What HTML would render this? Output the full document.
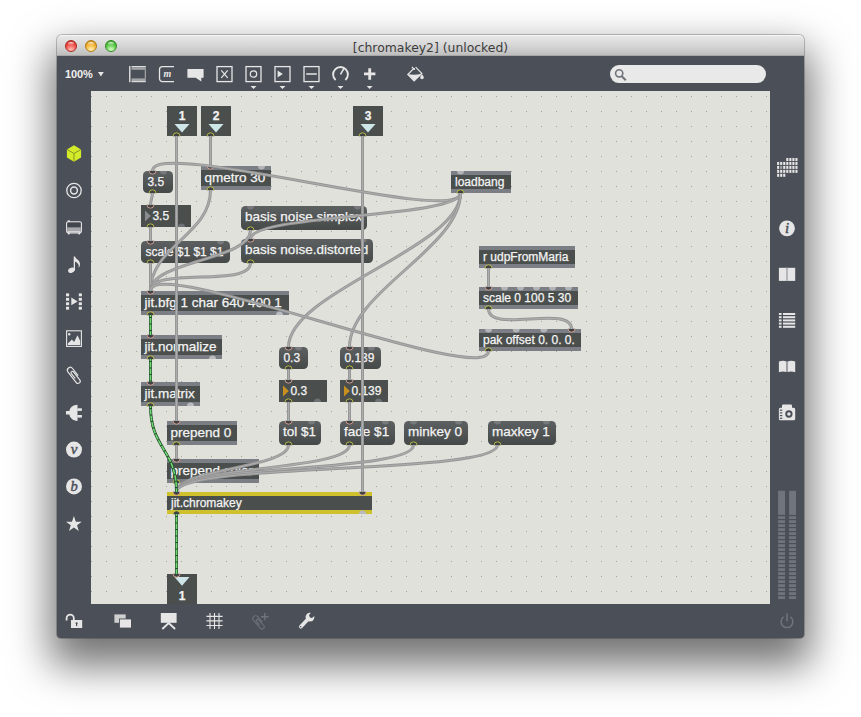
<!DOCTYPE html><html><head><meta charset="utf-8"><title>[chromakey2] (unlocked)</title>
<style>
html,body{margin:0;padding:0;background:#fff;}
body{width:861px;height:717px;overflow:hidden;position:relative;font-family:"Liberation Sans",sans-serif;}
#win{position:absolute;left:57px;top:35px;width:747px;height:603px;background:#4B4F57;border-radius:5px 5px 4px 4px;
 box-shadow:0 0 0 1px rgba(0,0,0,.22),0 21px 40px 7px rgba(0,0,0,.55);}
#title{position:absolute;left:0;top:0;width:747px;height:21px;border-radius:5px 5px 0 0;overflow:hidden;
 background:linear-gradient(#e9e9e9 0,#d6d6d6 50%,#bfbfbf 93%,#9a9a9a 100%);box-shadow:inset 0 1px 0 #f6f6f6;
 font-family:"DejaVu Sans","Liberation Sans",sans-serif;font-size:12.4px;color:#3c3c3c;text-align:center;line-height:25px;letter-spacing:0;}
.tl{position:absolute;top:5px;width:12px;height:12px;border-radius:50%;box-sizing:border-box;}
#canvas{position:absolute;left:91px;top:91px;width:679px;height:513px;background:#E0E1DB;overflow:hidden;}
#inner{position:absolute;left:-91px;top:-91px;width:861px;height:717px;}
.b{position:absolute;box-sizing:border-box;color:#f4f4f4;-webkit-text-stroke:0.25px #f4f4f4;white-space:nowrap;overflow:hidden;}
.obj{background:#4A4F4D;border-top:4px solid #7B7E84;border-bottom:4px solid #7B7E84;}
.sel{border-color:#CFC12E;}
.msg{background:linear-gradient(#5d6061,#454948);border-radius:4.5px;}
.flo{background:#4A4F4D;}
.io{background:#4A4F4D;font-weight:bold;text-align:center;}
.b span{position:absolute;left:0;}
#zoom{position:absolute;left:65px;top:67px;font-size:11px;font-weight:bold;color:#f0f0f0;line-height:14px;letter-spacing:-0.1px;}
svg{position:absolute;left:0;top:0;}
.ic{font-family:"Liberation Serif",serif;font-style:italic;font-weight:normal;fill:#4B4F57;stroke:#4B4F57;stroke-width:0.45px;}
</style></head><body>
<div id="win"><div id="title">[chromakey2] (unlocked)
<div class="tl" style="left:8px;background:radial-gradient(circle at 50% 92%,#ffb0a8 0,#ffb0a8 12%,#f24d48 58%,#a8281f 108%);border:1px solid #a8281f;"><div style="position:absolute;left:2px;top:0.5px;width:6px;height:3.4px;border-radius:50%;background:linear-gradient(rgba(255,255,255,.8),rgba(255,255,255,.05));"></div></div>
<div class="tl" style="left:28px;background:radial-gradient(circle at 50% 92%,#ffe9a0 0,#ffe9a0 12%,#f3b234 58%,#b07a12 108%);border:1px solid #b07a12;"><div style="position:absolute;left:2px;top:0.5px;width:6px;height:3.4px;border-radius:50%;background:linear-gradient(rgba(255,255,255,.8),rgba(255,255,255,.05));"></div></div>
<div class="tl" style="left:48px;background:radial-gradient(circle at 50% 92%,#c6f7b4 0,#c6f7b4 12%,#58c746 58%,#2f8a22 108%);border:1px solid #2f8a22;"><div style="position:absolute;left:2px;top:0.5px;width:6px;height:3.4px;border-radius:50%;background:linear-gradient(rgba(255,255,255,.8),rgba(255,255,255,.05));"></div></div>
</div></div>
<div id="zoom">100%</div>
<div id="canvas"><div id="inner">
<svg width="861" height="717"><defs><pattern id="dots" x="91" y="96" width="15" height="15" patternUnits="userSpaceOnUse"><rect x="0" y="0" width="1" height="1" fill="#a3a39f"/></pattern></defs><rect x="91" y="91" width="679" height="513" fill="url(#dots)"/></svg>
<div class="b io" style="left:167px;top:106px;width:30px;height:30px;font-size:12px;"><span style="left:0;width:30px;top:3.94px;line-height:13.79px">1</span></div>
<div class="b io" style="left:201px;top:106px;width:30px;height:30px;font-size:12px;"><span style="left:0;width:30px;top:3.94px;line-height:13.79px">2</span></div>
<div class="b io" style="left:353px;top:106px;width:30px;height:30px;font-size:12px;"><span style="left:0;width:30px;top:3.94px;line-height:13.79px">3</span></div>
<div class="b msg" style="left:143px;top:171px;width:30px;height:22px;font-size:12px;"><span style="left:4.4px;top:5.04px;line-height:13.79px">3.5</span></div>
<div class="b obj" style="left:201px;top:166px;width:70px;height:24px;font-size:13.5px;"><span style="left:3.5px;top:0.08px;line-height:15.51px">qmetro 30</span></div>
<div class="b obj" style="left:451px;top:171px;width:60px;height:22px;font-size:12px;"><span style="left:4px;top:1.14px;line-height:13.79px">loadbang</span></div>
<div class="b flo" style="left:141px;top:205px;width:50px;height:22px;font-size:12px;"><span style="left:11.4px;top:5.04px;line-height:13.79px">3.5</span></div>
<div class="b msg" style="left:241px;top:206px;width:126px;height:24px;font-size:13.5px;"><span style="left:4.1px;top:3.48px;line-height:15.51px">basis noise.simplex</span></div>
<div class="b msg" style="left:141px;top:241px;width:89px;height:22px;font-size:12px;"><span style="left:4.4px;top:5.04px;line-height:13.79px">scale $1 $1 $1</span></div>
<div class="b msg" style="left:241px;top:239px;width:132px;height:24px;font-size:13.5px;"><span style="left:4.1px;top:3.48px;line-height:15.51px">basis noise.distorted</span></div>
<div class="b obj" style="left:479px;top:246px;width:96px;height:22px;font-size:12px;"><span style="left:4px;top:1.14px;line-height:13.79px">r udpFromMaria</span></div>
<div class="b obj" style="left:479px;top:287px;width:99px;height:22px;font-size:12px;"><span style="left:4px;top:1.14px;line-height:13.79px">scale 0 100 5 30</span></div>
<div class="b obj" style="left:141px;top:291px;width:148px;height:24px;font-size:13.5px;"><span style="left:3.5px;top:0.08px;line-height:15.51px">jit.bfg 1 char 640 400 1</span></div>
<div class="b obj" style="left:479px;top:329px;width:102px;height:22px;font-size:12px;"><span style="left:4px;top:1.14px;line-height:13.79px">pak offset 0. 0. 0.</span></div>
<div class="b obj" style="left:141px;top:335px;width:81px;height:24px;font-size:13.5px;"><span style="left:3.5px;top:0.08px;line-height:15.51px">jit.normalize</span></div>
<div class="b msg" style="left:279px;top:347px;width:29px;height:22px;font-size:12px;"><span style="left:4.4px;top:5.04px;line-height:13.79px">0.3</span></div>
<div class="b msg" style="left:340px;top:347px;width:41px;height:22px;font-size:12px;"><span style="left:4.4px;top:5.04px;line-height:13.79px">0.139</span></div>
<div class="b obj" style="left:141px;top:382px;width:59px;height:24px;font-size:13.5px;"><span style="left:3.5px;top:0.08px;line-height:15.51px">jit.matrix</span></div>
<div class="b flo" style="left:279px;top:380px;width:48px;height:22px;font-size:12px;"><span style="left:11.4px;top:5.04px;line-height:13.79px">0.3</span></div>
<div class="b flo" style="left:340px;top:380px;width:48px;height:22px;font-size:12px;"><span style="left:11.4px;top:5.04px;line-height:13.79px">0.139</span></div>
<div class="b obj" style="left:167px;top:421px;width:70px;height:24px;font-size:13.5px;"><span style="left:3.5px;top:0.08px;line-height:15.51px">prepend 0</span></div>
<div class="b msg" style="left:279px;top:421px;width:42px;height:24px;font-size:13.5px;"><span style="left:4.1px;top:3.48px;line-height:15.51px">tol $1</span></div>
<div class="b msg" style="left:340px;top:421px;width:55px;height:24px;font-size:13.5px;"><span style="left:4.1px;top:3.48px;line-height:15.51px">fade $1</span></div>
<div class="b msg" style="left:404px;top:421px;width:64px;height:24px;font-size:13.5px;"><span style="left:4.1px;top:3.48px;line-height:15.51px">minkey 0</span></div>
<div class="b msg" style="left:488px;top:421px;width:68px;height:24px;font-size:13.5px;"><span style="left:4.1px;top:3.48px;line-height:15.51px">maxkey 1</span></div>
<div class="b obj" style="left:167px;top:459px;width:92px;height:24px;font-size:13.5px;"><span style="left:3.5px;top:0.08px;line-height:15.51px">prepend color</span></div>
<div class="b obj sel" style="left:167px;top:492px;width:205px;height:22px;font-size:12px;"><span style="left:4px;top:1.14px;line-height:13.79px">jit.chromakey</span></div>
<div class="b io" style="left:167px;top:574px;width:30px;height:30px;font-size:12px;"><span style="left:0;width:30px;top:15.94px;line-height:13.79px">1</span></div>
<svg width="861" height="717"><path d="M174.5,124h15l-7.5,8.6z" fill="#CFE6E9"/><path d="M173.0,136.3A3.5,3.5 0 0 1 180.0,136.3" fill="#3f4143" stroke="#C6CA45" stroke-width="0.85"/><path d="M208.5,124h15l-7.5,8.6z" fill="#CFE6E9"/><path d="M207.0,136.3A3.5,3.5 0 0 1 214.0,136.3" fill="#3f4143" stroke="#C6CA45" stroke-width="0.85"/><path d="M360.5,124h15l-7.5,8.6z" fill="#CFE6E9"/><path d="M359.0,136.3A3.5,3.5 0 0 1 366.0,136.3" fill="#3f4143" stroke="#C6CA45" stroke-width="0.85"/><path d="M149.0,170.7A3.5,3.5 0 0 0 156.0,170.7" fill="#3f4143" stroke="#E3A79B" stroke-width="0.85"/><path d="M160.0,171A3.5,3.5 0 0 0 167.0,171z" fill="#77797D"/><path d="M149.0,193.3A3.5,3.5 0 0 1 156.0,193.3" fill="#3f4143" stroke="#C6CA45" stroke-width="0.85"/><path d="M207.0,165.7A3.5,3.5 0 0 0 214.0,165.7" fill="#3f4143" stroke="#E3A79B" stroke-width="0.85"/><path d="M258.0,166A3.5,3.5 0 0 0 265.0,166z" fill="#B2B4B8"/><path d="M207.0,190.3A3.5,3.5 0 0 1 214.0,190.3" fill="#3f4143" stroke="#C6CA45" stroke-width="0.85"/><path d="M457.0,171A3.5,3.5 0 0 0 464.0,171z" fill="#B2B4B8"/><path d="M457.0,193.3A3.5,3.5 0 0 1 464.0,193.3" fill="#3f4143" stroke="#C6CA45" stroke-width="0.85"/><path d="M145,210.5v11l5.8,-5.5z" fill="#8A8D8F"/><path d="M147.0,204.7A3.5,3.5 0 0 0 154.0,204.7" fill="#3f4143" stroke="#E3A79B" stroke-width="0.85"/><path d="M147.0,227.3A3.5,3.5 0 0 1 154.0,227.3" fill="#3f4143" stroke="#C6CA45" stroke-width="0.85"/><path d="M178.0,227A3.5,3.5 0 0 1 185.0,227z" fill="#6E7173"/><path d="M247.0,206A3.5,3.5 0 0 0 254.0,206z" fill="#77797D"/><path d="M354.0,206A3.5,3.5 0 0 0 361.0,206z" fill="#77797D"/><path d="M247.0,230.3A3.5,3.5 0 0 1 254.0,230.3" fill="#3f4143" stroke="#C6CA45" stroke-width="0.85"/><path d="M147.0,240.7A3.5,3.5 0 0 0 154.0,240.7" fill="#3f4143" stroke="#E3A79B" stroke-width="0.85"/><path d="M217.0,241A3.5,3.5 0 0 0 224.0,241z" fill="#77797D"/><path d="M147.0,263.3A3.5,3.5 0 0 1 154.0,263.3" fill="#3f4143" stroke="#C6CA45" stroke-width="0.85"/><path d="M247.0,238.7A3.5,3.5 0 0 0 254.0,238.7" fill="#3f4143" stroke="#E3A79B" stroke-width="0.85"/><path d="M360.0,239A3.5,3.5 0 0 0 367.0,239z" fill="#77797D"/><path d="M247.0,263.3A3.5,3.5 0 0 1 254.0,263.3" fill="#3f4143" stroke="#C6CA45" stroke-width="0.85"/><path d="M485.0,268.3A3.5,3.5 0 0 1 492.0,268.3" fill="#3f4143" stroke="#C6CA45" stroke-width="0.85"/><path d="M485.0,286.7A3.5,3.5 0 0 0 492.0,286.7" fill="#3f4143" stroke="#E3A79B" stroke-width="0.85"/><path d="M501.0,287A3.5,3.5 0 0 0 508.0,287z" fill="#B2B4B8"/><path d="M517.0,287A3.5,3.5 0 0 0 524.0,287z" fill="#B2B4B8"/><path d="M533.0,287A3.5,3.5 0 0 0 540.0,287z" fill="#B2B4B8"/><path d="M549.0,287A3.5,3.5 0 0 0 556.0,287z" fill="#B2B4B8"/><path d="M565.0,287A3.5,3.5 0 0 0 572.0,287z" fill="#B2B4B8"/><path d="M485.0,309.3A3.5,3.5 0 0 1 492.0,309.3" fill="#3f4143" stroke="#C6CA45" stroke-width="0.85"/><path d="M147.0,290.7A3.5,3.5 0 0 0 154.0,290.7" fill="#3f4143" stroke="#E3A79B" stroke-width="0.85"/><path d="M147.0,315.3A3.5,3.5 0 0 1 154.0,315.3" fill="#3f4143" stroke="#C6CA45" stroke-width="0.85"/><path d="M276.0,315A3.5,3.5 0 0 1 283.0,315z" fill="#B9BBBF"/><path d="M485.0,329A3.5,3.5 0 0 0 492.0,329z" fill="#B2B4B8"/><path d="M512.6666666666666,329A3.5,3.5 0 0 0 519.6666666666666,329z" fill="#B2B4B8"/><path d="M540.3333333333334,329A3.5,3.5 0 0 0 547.3333333333334,329z" fill="#B2B4B8"/><path d="M568.0,328.7A3.5,3.5 0 0 0 575.0,328.7" fill="#3f4143" stroke="#E3A79B" stroke-width="0.85"/><path d="M485.0,351.3A3.5,3.5 0 0 1 492.0,351.3" fill="#3f4143" stroke="#C6CA45" stroke-width="0.85"/><path d="M147.0,334.7A3.5,3.5 0 0 0 154.0,334.7" fill="#3f4143" stroke="#E3A79B" stroke-width="0.85"/><path d="M147.0,359.3A3.5,3.5 0 0 1 154.0,359.3" fill="#3f4143" stroke="#C6CA45" stroke-width="0.85"/><path d="M209.0,359A3.5,3.5 0 0 1 216.0,359z" fill="#B9BBBF"/><path d="M285.0,346.7A3.5,3.5 0 0 0 292.0,346.7" fill="#3f4143" stroke="#E3A79B" stroke-width="0.85"/><path d="M295.0,347A3.5,3.5 0 0 0 302.0,347z" fill="#77797D"/><path d="M285.0,369.3A3.5,3.5 0 0 1 292.0,369.3" fill="#3f4143" stroke="#C6CA45" stroke-width="0.85"/><path d="M346.0,346.7A3.5,3.5 0 0 0 353.0,346.7" fill="#3f4143" stroke="#E3A79B" stroke-width="0.85"/><path d="M368.0,347A3.5,3.5 0 0 0 375.0,347z" fill="#77797D"/><path d="M346.0,369.3A3.5,3.5 0 0 1 353.0,369.3" fill="#3f4143" stroke="#C6CA45" stroke-width="0.85"/><path d="M147.0,381.7A3.5,3.5 0 0 0 154.0,381.7" fill="#3f4143" stroke="#E3A79B" stroke-width="0.85"/><path d="M147.0,406.3A3.5,3.5 0 0 1 154.0,406.3" fill="#3f4143" stroke="#C6CA45" stroke-width="0.85"/><path d="M187.0,406A3.5,3.5 0 0 1 194.0,406z" fill="#B9BBBF"/><path d="M283,385.5v11l5.8,-5.5z" fill="#C8901E"/><path d="M285.0,379.7A3.5,3.5 0 0 0 292.0,379.7" fill="#3f4143" stroke="#E3A79B" stroke-width="0.85"/><path d="M285.0,402.3A3.5,3.5 0 0 1 292.0,402.3" fill="#3f4143" stroke="#C6CA45" stroke-width="0.85"/><path d="M314.0,402A3.5,3.5 0 0 1 321.0,402z" fill="#6E7173"/><path d="M344,385.5v11l5.8,-5.5z" fill="#C8901E"/><path d="M346.0,379.7A3.5,3.5 0 0 0 353.0,379.7" fill="#3f4143" stroke="#E3A79B" stroke-width="0.85"/><path d="M346.0,402.3A3.5,3.5 0 0 1 353.0,402.3" fill="#3f4143" stroke="#C6CA45" stroke-width="0.85"/><path d="M375.0,402A3.5,3.5 0 0 1 382.0,402z" fill="#6E7173"/><path d="M173.0,420.7A3.5,3.5 0 0 0 180.0,420.7" fill="#3f4143" stroke="#E3A79B" stroke-width="0.85"/><path d="M173.0,445.3A3.5,3.5 0 0 1 180.0,445.3" fill="#3f4143" stroke="#C6CA45" stroke-width="0.85"/><path d="M285.0,420.7A3.5,3.5 0 0 0 292.0,420.7" fill="#3f4143" stroke="#E3A79B" stroke-width="0.85"/><path d="M308.0,421A3.5,3.5 0 0 0 315.0,421z" fill="#77797D"/><path d="M285.0,445.3A3.5,3.5 0 0 1 292.0,445.3" fill="#3f4143" stroke="#C6CA45" stroke-width="0.85"/><path d="M346.0,420.7A3.5,3.5 0 0 0 353.0,420.7" fill="#3f4143" stroke="#E3A79B" stroke-width="0.85"/><path d="M382.0,421A3.5,3.5 0 0 0 389.0,421z" fill="#77797D"/><path d="M346.0,445.3A3.5,3.5 0 0 1 353.0,445.3" fill="#3f4143" stroke="#C6CA45" stroke-width="0.85"/><path d="M410.0,421A3.5,3.5 0 0 0 417.0,421z" fill="#77797D"/><path d="M455.0,421A3.5,3.5 0 0 0 462.0,421z" fill="#77797D"/><path d="M410.0,445.3A3.5,3.5 0 0 1 417.0,445.3" fill="#3f4143" stroke="#C6CA45" stroke-width="0.85"/><path d="M494.0,421A3.5,3.5 0 0 0 501.0,421z" fill="#77797D"/><path d="M543.0,421A3.5,3.5 0 0 0 550.0,421z" fill="#77797D"/><path d="M494.0,445.3A3.5,3.5 0 0 1 501.0,445.3" fill="#3f4143" stroke="#C6CA45" stroke-width="0.85"/><path d="M173.0,458.7A3.5,3.5 0 0 0 180.0,458.7" fill="#3f4143" stroke="#E3A79B" stroke-width="0.85"/><path d="M173.0,483.3A3.5,3.5 0 0 1 180.0,483.3" fill="#3f4143" stroke="#C6CA45" stroke-width="0.85"/><path d="M173.0,491.7A3.5,3.5 0 0 0 180.0,491.7" fill="#3f4143" stroke="#E3A79B" stroke-width="0.85"/><path d="M359.0,491.7A3.5,3.5 0 0 0 366.0,491.7" fill="#3f4143" stroke="#E3A79B" stroke-width="0.85"/><path d="M173.0,514.3A3.5,3.5 0 0 1 180.0,514.3" fill="#3f4143" stroke="#C6CA45" stroke-width="0.85"/><path d="M359.0,514A3.5,3.5 0 0 1 366.0,514z" fill="#B9BBBF"/><path d="M174.5,577h15l-7.5,8.8z" fill="#CFE6E9"/><path d="M173.0,573.7A3.5,3.5 0 0 0 180.0,573.7" fill="#3f4143" stroke="#E3A79B" stroke-width="0.85"/><g fill="none" stroke-linecap="butt"><path d="M176.5,136L176.5,421" stroke="#969696" stroke-width="3"/><path d="M176.5,136L176.5,421" stroke="#adadad" stroke-width="1.1"/><path d="M210.5,136L210.5,166" stroke="#969696" stroke-width="3"/><path d="M210.5,136L210.5,166" stroke="#adadad" stroke-width="1.1"/><path d="M362.5,136L362.5,492" stroke="#969696" stroke-width="3"/><path d="M362.5,136L362.5,492" stroke="#adadad" stroke-width="1.1"/><path d="M210.5,190C210.5,235.0 150.5,246.0 150.5,291" stroke="#969696" stroke-width="3"/><path d="M210.5,190C210.5,235.0 150.5,246.0 150.5,291" stroke="#adadad" stroke-width="1.1"/><path d="M152.5,193C152.5,197.0 150.5,201.0 150.5,205" stroke="#969696" stroke-width="3"/><path d="M152.5,193C152.5,197.0 150.5,201.0 150.5,205" stroke="#adadad" stroke-width="1.1"/><path d="M150.5,227L150.5,241" stroke="#969696" stroke-width="3"/><path d="M150.5,227L150.5,241" stroke="#adadad" stroke-width="1.1"/><path d="M150.5,263L150.5,291" stroke="#969696" stroke-width="3"/><path d="M150.5,263L150.5,291" stroke="#adadad" stroke-width="1.1"/><path d="M460.5,193C460.5,227.0 152.5,137.0 152.5,171" stroke="#969696" stroke-width="3"/><path d="M460.5,193C460.5,227.0 152.5,137.0 152.5,171" stroke="#adadad" stroke-width="1.1"/><path d="M460.5,193C460.5,218.0 250.5,214.0 250.5,239" stroke="#969696" stroke-width="3"/><path d="M460.5,193C460.5,218.0 250.5,214.0 250.5,239" stroke="#adadad" stroke-width="1.1"/><path d="M460.5,193C460.5,248.0 288.5,292.0 288.5,347" stroke="#969696" stroke-width="3"/><path d="M460.5,193C460.5,248.0 288.5,292.0 288.5,347" stroke="#adadad" stroke-width="1.1"/><path d="M460.5,193C460.5,248.0 349.5,292.0 349.5,347" stroke="#969696" stroke-width="3"/><path d="M460.5,193C460.5,248.0 349.5,292.0 349.5,347" stroke="#adadad" stroke-width="1.1"/><path d="M250.5,230C250.5,260.5 150.5,260.5 150.5,291" stroke="#969696" stroke-width="3"/><path d="M250.5,230C250.5,260.5 150.5,260.5 150.5,291" stroke="#adadad" stroke-width="1.1"/><path d="M250.5,263C250.5,288.0 150.5,266.0 150.5,291" stroke="#969696" stroke-width="3"/><path d="M250.5,263C250.5,288.0 150.5,266.0 150.5,291" stroke="#adadad" stroke-width="1.1"/><path d="M488.5,351C488.5,389.0 150.5,253.0 150.5,291" stroke="#969696" stroke-width="3"/><path d="M488.5,351C488.5,389.0 150.5,253.0 150.5,291" stroke="#adadad" stroke-width="1.1"/><path d="M488.5,268L488.5,287" stroke="#969696" stroke-width="3"/><path d="M488.5,268L488.5,287" stroke="#adadad" stroke-width="1.1"/><path d="M488.5,309C488.5,334.0 571.5,304.0 571.5,329" stroke="#969696" stroke-width="3"/><path d="M488.5,309C488.5,334.0 571.5,304.0 571.5,329" stroke="#adadad" stroke-width="1.1"/><path d="M288.5,369L288.5,380" stroke="#969696" stroke-width="3"/><path d="M288.5,369L288.5,380" stroke="#adadad" stroke-width="1.1"/><path d="M288.5,402L288.5,421" stroke="#969696" stroke-width="3"/><path d="M288.5,402L288.5,421" stroke="#adadad" stroke-width="1.1"/><path d="M349.5,369L349.5,380" stroke="#969696" stroke-width="3"/><path d="M349.5,369L349.5,380" stroke="#adadad" stroke-width="1.1"/><path d="M349.5,402L349.5,421" stroke="#969696" stroke-width="3"/><path d="M349.5,402L349.5,421" stroke="#adadad" stroke-width="1.1"/><path d="M288.5,445C288.5,468.0 176.5,469.0 176.5,492" stroke="#969696" stroke-width="3"/><path d="M288.5,445C288.5,468.0 176.5,469.0 176.5,492" stroke="#adadad" stroke-width="1.1"/><path d="M349.5,445C349.5,471.0 176.5,466.0 176.5,492" stroke="#969696" stroke-width="3"/><path d="M349.5,445C349.5,471.0 176.5,466.0 176.5,492" stroke="#adadad" stroke-width="1.1"/><path d="M413.5,445C413.5,473.0 176.5,464.0 176.5,492" stroke="#969696" stroke-width="3"/><path d="M413.5,445C413.5,473.0 176.5,464.0 176.5,492" stroke="#adadad" stroke-width="1.1"/><path d="M497.5,445C497.5,475.0 176.5,462.0 176.5,492" stroke="#969696" stroke-width="3"/><path d="M497.5,445C497.5,475.0 176.5,462.0 176.5,492" stroke="#adadad" stroke-width="1.1"/><path d="M176.5,445L176.5,459" stroke="#969696" stroke-width="3"/><path d="M176.5,445L176.5,459" stroke="#adadad" stroke-width="1.1"/><path d="M176.5,483L176.5,492" stroke="#969696" stroke-width="3"/><path d="M176.5,483L176.5,492" stroke="#adadad" stroke-width="1.1"/><path d="M150.5,315L150.5,335" stroke="#234a2b" stroke-width="2.9"/><path d="M150.5,315L150.5,335" stroke="#6bd970" stroke-width="1.55" stroke-dasharray="5.4 1.1" stroke-dashoffset="3.5"/><path d="M150.5,359L150.5,382" stroke="#234a2b" stroke-width="2.9"/><path d="M150.5,359L150.5,382" stroke="#6bd970" stroke-width="1.55" stroke-dasharray="5.4 1.1" stroke-dashoffset="3.5"/><path d="M150.5,406C150.5,449.0 176.5,449.0 176.5,492" stroke="#234a2b" stroke-width="2.9"/><path d="M150.5,406C150.5,449.0 176.5,449.0 176.5,492" stroke="#6bd970" stroke-width="1.55" stroke-dasharray="5.4 1.1" stroke-dashoffset="3.5"/><path d="M176.5,514L176.5,574" stroke="#234a2b" stroke-width="2.9"/><path d="M176.5,514L176.5,574" stroke="#6bd970" stroke-width="1.55" stroke-dasharray="5.4 1.1" stroke-dashoffset="3.5"/></g></svg>
</div></div>
<svg width="861" height="717"><path d="M98,72h5.8l-2.9,4.4z" fill="#E6E6E6"/><g fill="none"><rect x="129" y="66" width="1.5" height="16.2" fill="#d6d6d6"/><rect x="131.5" y="66" width="14.3" height="1.2" fill="#dcdcdc"/><rect x="131.5" y="67.2" width="14.3" height="2.6" fill="#a2a4a8"/><rect x="131.5" y="78.4" width="14.3" height="2.6" fill="#a2a4a8"/><rect x="131.5" y="81" width="14.3" height="1.2" fill="#dcdcdc"/><rect x="144.8" y="69.8" width="1" height="8.6" fill="#b8b9bc"/></g><path d="M174,66.6h-11.5a3,3 0 0 0 -3,3v9a3,3 0 0 0 3,3h11.5" fill="none" stroke="#E6E6E6" stroke-width="1.3"/><text x="163.4" y="76.7" font-family="Liberation Serif,serif" font-style="italic" font-weight="bold" font-size="10" fill="#E6E6E6">m</text><path d="M187.4,69h16.2v8.7h-2.3v3.8l-5.6,-3.8h-8.3z" fill="#E6E6E6"/><rect x="217" y="66.6" width="15" height="15" fill="none" stroke="#E6E6E6" stroke-width="1.3"/><path d="M221.3,70.3l6.4,7.6M227.7,70.3l-6.4,7.6" stroke="#E6E6E6" stroke-width="1.2" fill="none"/><rect x="246" y="66.6" width="15" height="15" fill="none" stroke="#E6E6E6" stroke-width="1.3"/><circle cx="253.5" cy="74" r="3.2" fill="none" stroke="#E6E6E6" stroke-width="1.2"/><rect x="275" y="66.6" width="15" height="15" fill="none" stroke="#E6E6E6" stroke-width="1.3"/><path d="M277.6,70.6v6.8l5.2,-3.4z" fill="#E6E6E6"/><rect x="304" y="66.6" width="15" height="15" fill="none" stroke="#E6E6E6" stroke-width="1.3"/><path d="M306.2,74h10.6" stroke="#E6E6E6" stroke-width="1.5"/><path d="M335.6,80A7.4,7.4 0 1 1 345.4,80" fill="none" stroke="#E6E6E6" stroke-width="1.9"/><path d="M340.5,74.3l3.9,-6.6" stroke="#E6E6E6" stroke-width="1.6"/><path d="M364,73.9h11.4M369.7,68.2v11.6" stroke="#E6E6E6" stroke-width="2.8"/><path d="M250.5,86h6l-3,3z" fill="#E6E6E6"/><path d="M279.5,86h6l-3,3z" fill="#E6E6E6"/><path d="M308.5,86h6l-3,3z" fill="#E6E6E6"/><path d="M337.5,86h6l-3,3z" fill="#E6E6E6"/><path d="M366.6,86h6l-3,3z" fill="#E6E6E6"/><path d="M413.8,68.4l-6,6.1l6.3,6.4l7.7,-7.5l-6.2,-6.3" fill="none" stroke="#E6E6E6" stroke-width="1.2"/><path d="M408,74.2l6.1,6.6l7.2,-7.1c-4,1.2 -9,1.2 -13.3,0.5z" fill="#E6E6E6"/><path d="M411.9,67l2.6,2.6" stroke="#E6E6E6" stroke-width="1.1"/><circle cx="414.2" cy="69" r="0.9" fill="#E6E6E6"/><path d="M422,74.3c1.2,1.6 1.8,2.4 1.8,3.2a1.8,1.8 0 0 1 -3.6,0c0,-0.8 0.6,-1.6 1.8,-3.2z" fill="#E6E6E6"/><rect x="610" y="65.1" width="156" height="17.9" rx="8.95" fill="#E9E9E9"/><circle cx="619.2" cy="73.3" r="3.6" fill="none" stroke="#70757C" stroke-width="1.6"/><path d="M621.8,76.2l4,4" stroke="#70757C" stroke-width="2"/><path d="M74,145.3l7.1,4.1v8.2l-7.1,4.1l-7.1,-4.1v-8.2z" fill="#D4EB2B"/><path d="M66.9,149.4l7.1,4.1l7.1,-4.1M74,153.5v8.2" fill="none" stroke="#7f8f1e" stroke-width="0.9"/><circle cx="74" cy="190.5" r="7.2" fill="none" stroke="#E6E6E6" stroke-width="1.3"/><circle cx="74" cy="190.5" r="3.4" fill="none" stroke="#E6E6E6" stroke-width="1.5"/><rect x="66.7" y="221.8" width="14.6" height="11" rx="1.5" fill="none" stroke="#E6E6E6" stroke-width="1.3"/><rect x="67.4" y="222.6" width="13.2" height="4.8" fill="#41454c"/><rect x="67.4" y="227.4" width="13.2" height="3.1" fill="#a6a8ac"/><rect x="67.4" y="230.5" width="13.2" height="1.6" fill="#d4d4d4"/><circle cx="68.8" cy="233.4" r="1.1" fill="#E6E6E6"/><circle cx="79.2" cy="233.4" r="1.1" fill="#E6E6E6"/><rect x="67.6" y="220.4" width="2.4" height="1.5" fill="#E6E6E6"/><ellipse cx="71.4" cy="270.2" rx="3.4" ry="2.5" transform="rotate(-25 71.4 270.2)" fill="#E6E6E6"/><path d="M73.7,270.4V256.6h1.3c0.5,2.4 5.2,3.6 5,7.8c-0.1,1.4 -0.7,2.6 -1.5,3.4c0.8,-2.6 -0.2,-4.8 -3.5,-6.2v8.8z" fill="#E6E6E6"/><rect x="66" y="293.40" width="3.1" height="2.9" fill="#E6E6E6"/><rect x="78.8" y="293.40" width="3.1" height="2.9" fill="#E6E6E6"/><rect x="66" y="297.85" width="3.1" height="2.9" fill="#E6E6E6"/><rect x="78.8" y="297.85" width="3.1" height="2.9" fill="#E6E6E6"/><rect x="66" y="302.30" width="3.1" height="2.9" fill="#E6E6E6"/><rect x="78.8" y="302.30" width="3.1" height="2.9" fill="#E6E6E6"/><rect x="66" y="306.75" width="3.1" height="2.9" fill="#E6E6E6"/><rect x="78.8" y="306.75" width="3.1" height="2.9" fill="#E6E6E6"/><path d="M71.3,297.6v7.6l6.3,-3.8z" fill="#E6E6E6"/><rect x="66.6" y="330.8" width="14.8" height="15.6" fill="none" stroke="#E6E6E6" stroke-width="1.1"/><path d="M67.8,345v-1.5l4.1,-4l2.2,2.6l3.4,-6.8l2.7,5.6v4.1z" fill="#E6E6E6"/><circle cx="69.2" cy="334.2" r="1.2" fill="#E6E6E6"/><g transform="translate(70.3,370.3) rotate(51.6)" fill="none" stroke="#E6E6E6" stroke-width="1.15"><path d="M9,-2.9L0,-2.9A2.9,2.9 0 0 0 0,2.9L13.3,2.9A2.2,2.2 0 0 0 13.3,-1.5L3.2,-1.5A1.35,1.35 0 0 0 3.2,1.2L9.5,1.2"/></g><path d="M77.5,404.7v16.2c-4.6,0 -8,-3.4 -8,-6.4h-3.5v-3.5h3.5c0,-3 3.4,-6.3 8,-6.3z" fill="#E6E6E6"/><rect x="77.3" y="408.3" width="4.6" height="2.6" fill="#E6E6E6"/><rect x="77.3" y="415" width="4.6" height="2.6" fill="#E6E6E6"/><circle cx="74" cy="449.6" r="8" fill="#E6E6E6"/><text x="74" y="454" text-anchor="middle" class="ic" font-size="15">v</text><circle cx="74" cy="486.4" r="8" fill="#E6E6E6"/><text x="74" y="491.2" text-anchor="middle" class="ic" font-size="14.5">b</text><polygon points="73.90,516.00 75.84,521.63 81.79,521.74 77.04,525.32 78.78,531.01 73.90,527.60 69.02,531.01 70.76,525.32 66.01,521.74 71.96,521.63" fill="#E6E6E6"/><rect x="71" y="620" width="11.2" height="8" fill="#E6E6E6"/><circle cx="76.6" cy="623.3" r="1.1" fill="#4B4F57"/><rect x="76" y="623.5" width="1.2" height="2.6" fill="#4B4F57"/><path d="M66.6,620.6v-2.4a3.6,3.6 0 0 1 7.2,0v2" fill="none" stroke="#E6E6E6" stroke-width="1.8"/><rect x="114.4" y="614.4" width="11.3" height="8.4" fill="#cfcfcf"/><rect x="119" y="618.5" width="12.6" height="9.7" fill="#4B4F57"/><rect x="119.9" y="619.4" width="11.1" height="8.2" fill="#E6E6E6"/><rect x="160.8" y="613" width="15.8" height="9.8" fill="#E6E6E6"/><path d="M162.3,629l6.4,-6l6.4,6" fill="none" stroke="#E6E6E6" stroke-width="1.9"/><path d="M210,613v16M214.5,613v16M219,613v16M206.4,616.4h16.2M206.4,620.9h16.2M206.4,625.5h16.2" stroke="#E6E6E6" stroke-width="1.1" fill="none"/><g transform="translate(255.6,618.5) rotate(48.4)" fill="none" stroke="#6E737B" stroke-width="1.1"><path d="M7,-2.8L0,-2.8A2.8,2.8 0 0 0 0,2.8L10.6,2.8A2.1,2.1 0 0 0 10.6,-1.4L2.8,-1.4A1.3,1.3 0 0 0 2.8,1.2L7.4,1.2"/></g><path d="M261,616.7h7.7M264.8,613.1v7.1" stroke="#6E737B" stroke-width="1.5"/><path d="M300.8,626.7L308.8,618.3" stroke="#E6E6E6" stroke-width="3.7" stroke-linecap="round" fill="none"/><circle cx="310" cy="617.1" r="4.4" fill="#E6E6E6"/><path d="M311.4,615.6L316.5,610.3" stroke="#4B4F57" stroke-width="4.5" stroke-linecap="round" fill="none"/><circle cx="300.7" cy="626.7" r="0.75" fill="#4B4F57"/><rect x="786.25" y="158.00" width="2.1" height="3" fill="#E6E6E6"/><rect x="789.30" y="158.00" width="2.1" height="3" fill="#E6E6E6"/><rect x="792.35" y="158.00" width="2.1" height="3" fill="#E6E6E6"/><rect x="795.40" y="158.00" width="2.1" height="3" fill="#E6E6E6"/><rect x="777.10" y="161.95" width="2.1" height="3" fill="#E6E6E6"/><rect x="780.15" y="161.95" width="2.1" height="3" fill="#E6E6E6"/><rect x="783.20" y="161.95" width="2.1" height="3" fill="#E6E6E6"/><rect x="786.25" y="161.95" width="2.1" height="3" fill="#E6E6E6"/><rect x="789.30" y="161.95" width="2.1" height="3" fill="#E6E6E6"/><rect x="792.35" y="161.95" width="2.1" height="3" fill="#E6E6E6"/><rect x="795.40" y="161.95" width="2.1" height="3" fill="#E6E6E6"/><rect x="777.10" y="165.90" width="2.1" height="3" fill="#E6E6E6"/><rect x="780.15" y="165.90" width="2.1" height="3" fill="#9fa2a7"/><rect x="783.20" y="165.90" width="2.1" height="3" fill="#E6E6E6"/><rect x="786.25" y="165.90" width="2.1" height="3" fill="#E6E6E6"/><rect x="789.30" y="165.90" width="2.1" height="3" fill="#E6E6E6"/><rect x="792.35" y="165.90" width="2.1" height="3" fill="#E6E6E6"/><rect x="795.40" y="165.90" width="2.1" height="3" fill="#E6E6E6"/><rect x="777.10" y="169.85" width="2.1" height="3" fill="#E6E6E6"/><rect x="780.15" y="169.85" width="2.1" height="3" fill="#E6E6E6"/><rect x="783.20" y="169.85" width="2.1" height="3" fill="#E6E6E6"/><rect x="786.25" y="169.85" width="2.1" height="3" fill="#E6E6E6"/><rect x="789.30" y="169.85" width="2.1" height="3" fill="#E6E6E6"/><rect x="792.35" y="169.85" width="2.1" height="3" fill="#E6E6E6"/><rect x="795.40" y="169.85" width="2.1" height="3" fill="#E6E6E6"/><rect x="777.10" y="173.80" width="2.1" height="3" fill="#E6E6E6"/><rect x="780.15" y="173.80" width="2.1" height="3" fill="#E6E6E6"/><rect x="783.20" y="173.80" width="2.1" height="3" fill="#E6E6E6"/><circle cx="787" cy="228.3" r="7.9" fill="#E6E6E6"/><text x="787" y="233.4" text-anchor="middle" class="ic" font-size="15">i</text><rect x="778.9" y="267.8" width="16.3" height="13.1" fill="#E6E6E6"/><rect x="786.2" y="267.8" width="1.6" height="13.1" fill="#a9abaf"/><rect x="778.9" y="313.0" width="2.7" height="2" fill="#E6E6E6"/><rect x="783" y="313.0" width="12.2" height="2" fill="#E6E6E6"/><rect x="778.9" y="316.2" width="2.7" height="2" fill="#E6E6E6"/><rect x="783" y="316.2" width="12.2" height="2" fill="#E6E6E6"/><rect x="778.9" y="319.4" width="2.7" height="2" fill="#E6E6E6"/><rect x="783" y="319.4" width="12.2" height="2" fill="#E6E6E6"/><rect x="778.9" y="322.6" width="2.7" height="2" fill="#E6E6E6"/><rect x="783" y="322.6" width="12.2" height="2" fill="#E6E6E6"/><rect x="778.9" y="325.8" width="2.7" height="2" fill="#E6E6E6"/><rect x="783" y="325.8" width="12.2" height="2" fill="#E6E6E6"/><path d="M778.9,361.6c2.6,-1 5.4,-1 7.4,-0.2v10.6c-2,-0.7 -4.8,-0.7 -7.4,0.2z" fill="#E6E6E6"/><path d="M795.2,361.6c-2.6,-1 -5.4,-1 -7.4,-0.2v10.6c2,-0.7 4.8,-0.7 7.4,0.2z" fill="#E6E6E6"/><rect x="786.3" y="361.4" width="1.5" height="10.6" fill="#a9abaf"/><path d="M780.4,407.8h1.6v-2a1.2,1.2 0 0 1 1.2,-1.2h7.6a1.2,1.2 0 0 1 1.2,1.2v2h1.7a1.5,1.5 0 0 1 1.5,1.5v9.5a1.5,1.5 0 0 1 -1.5,1.5h-13.3a1.5,1.5 0 0 1 -1.5,-1.5v-9.5a1.5,1.5 0 0 1 1.5,-1.5z" fill="#E6E6E6"/><circle cx="788.9" cy="414" r="2.7" fill="none" stroke="#4B4F57" stroke-width="1.9"/><rect x="779.9" y="409.6" width="2.4" height="1.2" fill="#4B4F57"/><rect x="779.9" y="412.3" width="2.4" height="1.2" fill="#4B4F57"/><rect x="779.9" y="415.0" width="2.4" height="1.2" fill="#4B4F57"/><rect x="779.9" y="417.7" width="2.4" height="1.2" fill="#4B4F57"/><rect x="778.1" y="490.8" width="6.9" height="24.1" fill="#70747C"/><rect x="778.1" y="516.2" width="6.9" height="2.8" fill="#70747C"/><rect x="778.1" y="520.2" width="6.9" height="2.8" fill="#70747C"/><rect x="778.1" y="524.2" width="6.9" height="2.8" fill="#70747C"/><rect x="778.1" y="528.2" width="6.9" height="2.8" fill="#70747C"/><rect x="778.1" y="532.2" width="6.9" height="2.8" fill="#70747C"/><rect x="778.1" y="536.2" width="6.9" height="2.8" fill="#70747C"/><rect x="778.1" y="540.2" width="6.9" height="2.8" fill="#70747C"/><rect x="778.1" y="544.2" width="6.9" height="2.8" fill="#70747C"/><rect x="778.1" y="548.2" width="6.9" height="2.8" fill="#70747C"/><rect x="778.1" y="552.2" width="6.9" height="2.8" fill="#70747C"/><rect x="778.1" y="556.2" width="6.9" height="2.8" fill="#70747C"/><rect x="778.1" y="560.2" width="6.9" height="2.8" fill="#70747C"/><rect x="778.1" y="564.2" width="6.9" height="2.8" fill="#70747C"/><rect x="778.1" y="568.2" width="6.9" height="2.8" fill="#70747C"/><rect x="778.1" y="572.2" width="6.9" height="2.8" fill="#70747C"/><rect x="778.1" y="576.2" width="6.9" height="2.8" fill="#70747C"/><rect x="778.1" y="580.2" width="6.9" height="2.8" fill="#70747C"/><rect x="778.1" y="584.2" width="6.9" height="2.8" fill="#70747C"/><rect x="778.1" y="588.2" width="6.9" height="2.8" fill="#70747C"/><rect x="778.1" y="592.2" width="6.9" height="2.8" fill="#70747C"/><rect x="778.1" y="596.2" width="6.9" height="2.8" fill="#70747C"/><rect x="789.1" y="490.8" width="6.9" height="24.1" fill="#70747C"/><rect x="789.1" y="516.2" width="6.9" height="2.8" fill="#70747C"/><rect x="789.1" y="520.2" width="6.9" height="2.8" fill="#70747C"/><rect x="789.1" y="524.2" width="6.9" height="2.8" fill="#70747C"/><rect x="789.1" y="528.2" width="6.9" height="2.8" fill="#70747C"/><rect x="789.1" y="532.2" width="6.9" height="2.8" fill="#70747C"/><rect x="789.1" y="536.2" width="6.9" height="2.8" fill="#70747C"/><rect x="789.1" y="540.2" width="6.9" height="2.8" fill="#70747C"/><rect x="789.1" y="544.2" width="6.9" height="2.8" fill="#70747C"/><rect x="789.1" y="548.2" width="6.9" height="2.8" fill="#70747C"/><rect x="789.1" y="552.2" width="6.9" height="2.8" fill="#70747C"/><rect x="789.1" y="556.2" width="6.9" height="2.8" fill="#70747C"/><rect x="789.1" y="560.2" width="6.9" height="2.8" fill="#70747C"/><rect x="789.1" y="564.2" width="6.9" height="2.8" fill="#70747C"/><rect x="789.1" y="568.2" width="6.9" height="2.8" fill="#70747C"/><rect x="789.1" y="572.2" width="6.9" height="2.8" fill="#70747C"/><rect x="789.1" y="576.2" width="6.9" height="2.8" fill="#70747C"/><rect x="789.1" y="580.2" width="6.9" height="2.8" fill="#70747C"/><rect x="789.1" y="584.2" width="6.9" height="2.8" fill="#70747C"/><rect x="789.1" y="588.2" width="6.9" height="2.8" fill="#70747C"/><rect x="789.1" y="592.2" width="6.9" height="2.8" fill="#70747C"/><rect x="789.1" y="596.2" width="6.9" height="2.8" fill="#70747C"/><path d="M783.6,616.9a5.9,5.9 0 1 0 6.8,0" fill="none" stroke="#70747C" stroke-width="1.5"/><path d="M787,613.2v8" stroke="#70747C" stroke-width="1.5"/></svg>
</body></html>
